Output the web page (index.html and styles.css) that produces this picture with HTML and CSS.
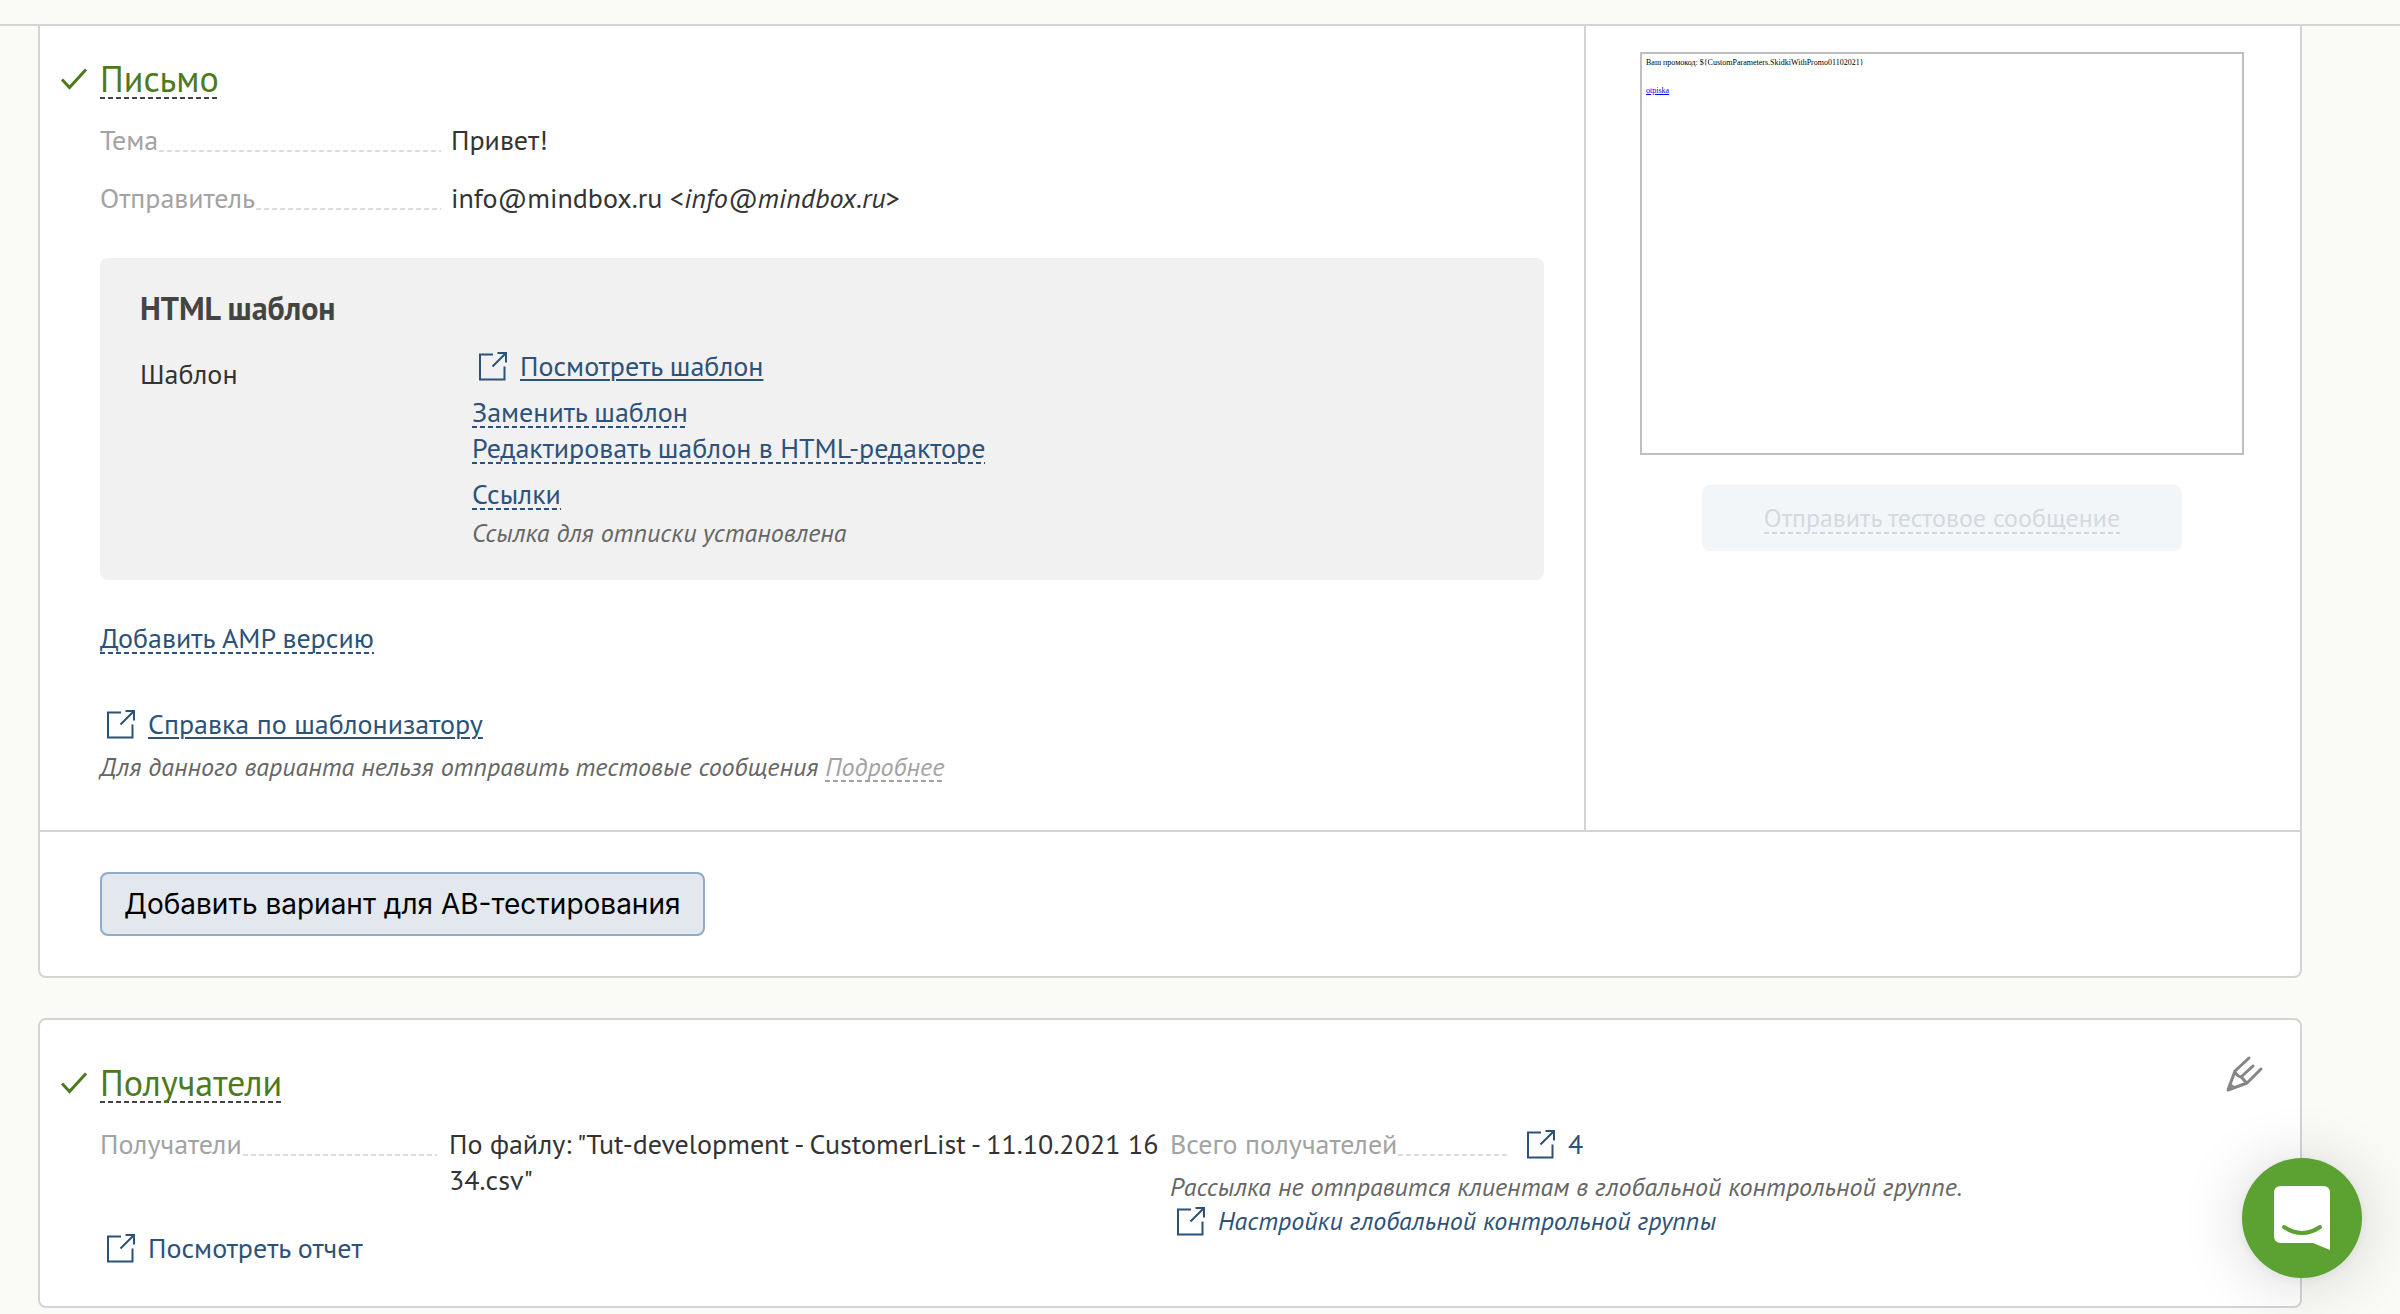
FILE: index.html
```html
<!DOCTYPE html>
<html lang="ru">
<head>
<meta charset="utf-8">
<title>Рассылка</title>
<meta name="viewport" content="width=device-width, initial-scale=1">
<link rel="stylesheet" href="styles.css">
</head>
<body>
<svg class="sprite" aria-hidden="true">
  <symbol id="external" viewBox="0 0 30 30">
    <path d="M15 3.5H2V28.5H26.5V15.500M19.500 2H28V11.500M28 2L14.500 15.500" fill="none" stroke="currentColor" stroke-width="2"/>
  </symbol>
  <symbol id="check" viewBox="0 0 28 24">
    <path d="M2 12.5L9.500 20.500L26 2.500" fill="none" stroke="currentColor" stroke-width="3"/>
  </symbol>
</svg>
<header class="topbar"></header>
<main class="page">
  <section class="card">
    <div class="letter">
      <div class="letter-main">
        <h2 class="title"><svg class="check"><use href="#check"/></svg><a class="dashed" href="#letter">Письмо</a></h2>
        <dl class="fields">
          <div class="field"><dt>Тема</dt><dd>Привет!</dd></div>
          <div class="field"><dt>Отправитель</dt><dd>info@mindbox.ru &lt;<em>info@mindbox.ru</em>&gt;</dd></div>
        </dl>
        <div class="template">
          <h3 class="subtitle">HTML шаблон</h3>
          <div class="template-row">
            <div class="template-label">Шаблон</div>
            <div class="template-links">
              <a class="icon-link" href="#view"><svg class="external"><use href="#external"/></svg><span class="underlined">Посмотреть шаблон</span></a>
              <div class="group">
                <a class="dashed" href="#replace">Заменить шаблон</a>
                <a class="dashed" href="#edit">Редактировать шаблон в HTML-редакторе</a>
              </div>
              <div class="group">
                <a class="dashed" href="#links">Ссылки</a>
                <p class="note">Ссылка для отписки установлена</p>
              </div>
            </div>
          </div>
        </div>
        <a class="dashed amp" href="#amp">Добавить AMP версию</a>
        <a class="icon-link help" href="#help"><svg class="external"><use href="#external"/></svg><span class="underlined">Справка по шаблонизатору</span></a>
        <p class="note">Для данного варианта нельзя отправить тестовые сообщения <a class="dashed muted" href="#more">Подробнее</a></p>
      </div>
      <aside class="preview">
        <div class="mail">
          <p>Ваш промокод: ${CustomParameters.SkidkiWithPromo01102021}</p>
          <p><a href="#otpiska">otpiska</a></p>
        </div>
        <button class="test-button" type="button" disabled><span class="dashed">Отправить тестовое сообщение</span></button>
      </aside>
    </div>
    <div class="actions">
      <button class="add-button" type="button">Добавить вариант для AB-тестирования</button>
    </div>
  </section>

  <section class="card recipients">
    <div class="recipients-head">
      <h2 class="title"><svg class="check"><use href="#check"/></svg><a class="dashed" href="#recipients">Получатели</a></h2>
      <button class="edit" type="button" aria-label="Редактировать">
        <svg viewBox="0 0 36 36" fill="none" stroke="currentColor" stroke-width="3" stroke-linecap="round" stroke-linejoin="round"><path d="M23 2L9 15L2 34L21 27L35 13M27 10L15 21M9 15C10 19 12 20.500 15 21C17 22 18 25 21 27M4.500 29L7.500 31.500"/></svg>
      </button>
    </div>
    <div class="recipients-grid">
      <div>
        <dl class="fields">
          <div class="field"><dt>Получатели</dt><dd>По файлу: "Tut-development - CustomerList - 11.10.2021 16 34.csv"</dd></div>
        </dl>
        <a class="icon-link report" href="#report"><svg class="external"><use href="#external"/></svg><span>Посмотреть отчет</span></a>
      </div>
      <div>
        <dl class="fields total">
          <div class="field"><dt>Всего получателей</dt><dd><a class="icon-link" href="#total"><svg class="external"><use href="#external"/></svg><span>4</span></a></dd></div>
        </dl>
        <p class="note">Рассылка не отправится клиентам в глобальной контрольной группе.</p>
        <a class="icon-link note-link" href="#control"><svg class="external"><use href="#external"/></svg><span>Настройки глобальной контрольной группы</span></a>
      </div>
    </div>
  </section>
</main>
<button class="chat" type="button" aria-label="Чат">
  <svg viewBox="0 0 56 64"><path d="M7 0H49Q56 0 56 7V64L39 57H7Q0 57 0 50V7Q0 0 7 0Z" fill="#fff"/><path d="M10 41Q28 53 46 41" fill="none" stroke="#5ba232" stroke-width="4" stroke-linecap="round"/></svg>
</button>
</body>
</html>
```
FILE: styles.css
```css
* { box-sizing: border-box; }
body {
  margin: 0;
  background: #fafbf6;
  color: #333;
  font: 28px/36px "PT Sans", "Noto Sans", sans-serif;
}
h2, h3, p, dl, dd, dt { margin: 0; font-weight: normal; }
a { color: #2d5279; text-decoration: none; }
button { font: inherit; cursor: pointer; }
.sprite { position: absolute; width: 0; height: 0; }

.topbar { height: 26px; border-bottom: 2px solid #d4d4d4; }
.page { padding: 0 98px 6px 38px; }
.card {
  background: #fff;
  border: 2px solid #d4d4d4;
  border-radius: 8px;
}
.card:first-child { border-top: 0; border-top-left-radius: 0; border-top-right-radius: 0; }
.letter {
  display: grid;
  grid-template-columns: 1fr 716px;
  border-bottom: 2px solid #d4d4d4;
}
.letter-main { padding: 31px 40px 46px 60px; }

.title {
  display: flex;
  align-items: center;
  margin-left: -40px;
  font-size: 36px;
  line-height: 44px;
}
.title a { color: #4d7a1e; --dash: #444; }
.check { width: 28px; height: 24px; margin-right: 12px; color: #4d7a1e; }

.dashed {
  --dash: #2d5279;
  display: inline-block;
  background: repeating-linear-gradient(90deg, var(--dash) 0 5px, transparent 5px 8px) 0 calc(100% - 2px) / 100% 2px no-repeat;
}
.muted { color: #a3a3a3; --dash: #a3a3a3; }
.underlined { text-decoration: underline; text-decoration-thickness: 2px; text-underline-offset: 3px; }

.fields { display: grid; gap: 22px; margin-top: 21px; }
.field { display: grid; grid-template-columns: 341px 1fr; gap: 10px; }
.field dt { display: flex; height: 36px; color: #a3a3a3; }
.field dt::after {
  content: "";
  flex: 1;
  margin-left: 1px;
  background: repeating-linear-gradient(90deg, #ddd 0 5px, transparent 5px 8px) 0 28px / 100% 2px no-repeat;
}

.template {
  margin-top: 42px;
  padding: 32px 40px 30px;
  background: #f1f1f1;
  border-radius: 8px;
}
.subtitle { font-size: 32px; font-weight: bold; color: #444; }
.template-row { display: grid; grid-template-columns: 332px 1fr; margin-top: 22px; }
.template-label { padding-top: 8px; }
.template-links, .group { display: flex; flex-direction: column; align-items: flex-start; }
.template-links { gap: 10px; }

.icon-link { display: flex; align-items: center; width: fit-content; }
.external { width: 30px; height: 30px; margin: 0 12px 0 6px; }
.amp { margin-top: 40px; }
.help { margin: 50px 0 8px; }
.note, .note-link { font-size: 26px; font-style: italic; line-height: 34px; color: #666; }
.group .note { margin-top: 4px; }
.note-link { color: #2d5279; }

.preview {
  display: flex;
  flex-direction: column;
  align-items: center;
  gap: 30px;
  padding: 26px 56px 26px 54px;
  border-left: 2px solid #d4d4d4;
}
.mail {
  width: 100%;
  aspect-ratio: 3 / 2;
  padding: 4px;
  border: 2px solid #bfbfbf;
  color: #000;
  font: 8px/10px "Liberation Serif", serif;
}
.mail p + p { margin-top: 18px; }
.mail a { color: #00e; text-decoration: underline; }
.test-button {
  width: 480px;
  height: 66px;
  padding: 0;
  border: 0;
  border-radius: 8px;
  background: #f3f6f9;
  color: #d3d9e0;
  font-size: 26px;
}
.test-button .dashed { --dash: #d3d9e0; }

.actions { padding: 40px 60px; }
.add-button {
  display: block;
  height: 64px;
  padding: 0 22px;
  border: 2px solid #8fabc5;
  border-radius: 8px;
  background: #e2e8ee;
  color: #000;
  font: 28px/36px Inter, sans-serif;
}

.recipients { margin-top: 40px; padding: 36px 38px 40px 60px; }
.recipients-head { display: flex; justify-content: space-between; align-items: flex-start; }
.recipients .title { margin-top: 5px; }
.edit { width: 36px; height: 36px; padding: 0; border: 0; background: none; color: #858585; }
.edit svg { display: block; width: 36px; height: 36px; overflow: visible; }
.recipients-grid { display: grid; grid-template-columns: 1070px 1fr; }
.recipients .field { grid-template-columns: 337px 1fr; gap: 12px; }
.total .field { grid-template-columns: 338px 1fr; }
.report { margin-top: 32px; }
.recipients .note { margin-top: 8px; }

.chat {
  position: fixed;
  right: 38px;
  bottom: 36px;
  display: grid;
  place-items: center;
  width: 120px;
  height: 120px;
  padding: 0;
  border: 0;
  border-radius: 50%;
  background: #5ba232;
  box-shadow: 0 2px 12px rgba(0, 0, 0, .06), 0 4px 64px rgba(0, 0, 0, .16);
}
.chat svg { width: 56px; height: 64px; }
```
